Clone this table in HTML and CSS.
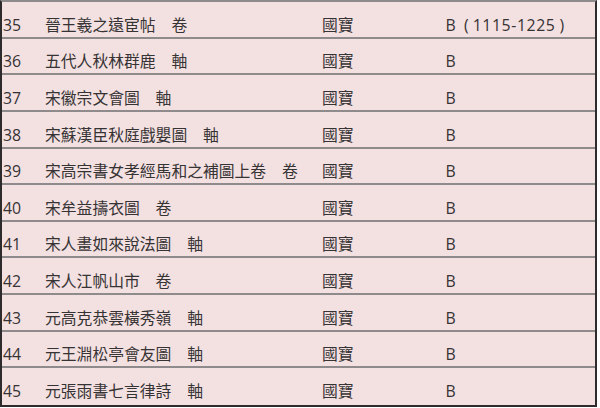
FILE: index.html
```html
<!DOCTYPE html>
<html lang="zh-Hant">
<head>
<meta charset="utf-8">
<link rel="stylesheet" href="styles.css">
</head>
<body>
<div class="table">
  <div class="row"><span class="num">35</span><span class="name">晉王羲之遠宦帖　卷</span><span class="grade">國寶</span><span class="cls">B&nbsp; (&nbsp;<span class="date">1115-1225</span>&nbsp;)</span></div>
  <div class="row"><span class="num">36</span><span class="name">五代人秋林群鹿　軸</span><span class="grade">國寶</span><span class="cls">B</span></div>
  <div class="row"><span class="num">37</span><span class="name">宋徽宗文會圖　軸</span><span class="grade">國寶</span><span class="cls">B</span></div>
  <div class="row"><span class="num">38</span><span class="name">宋蘇漢臣秋庭戲嬰圖　軸</span><span class="grade">國寶</span><span class="cls">B</span></div>
  <div class="row"><span class="num">39</span><span class="name">宋高宗書女孝經馬和之補圖上卷　卷</span><span class="grade">國寶</span><span class="cls">B</span></div>
  <div class="row"><span class="num">40</span><span class="name">宋牟益擣衣圖　卷</span><span class="grade">國寶</span><span class="cls">B</span></div>
  <div class="row"><span class="num">41</span><span class="name">宋人畫如來說法圖　軸</span><span class="grade">國寶</span><span class="cls">B</span></div>
  <div class="row"><span class="num">42</span><span class="name">宋人江帆山市　卷</span><span class="grade">國寶</span><span class="cls">B</span></div>
  <div class="row"><span class="num">43</span><span class="name">元高克恭雲橫秀嶺　軸</span><span class="grade">國寶</span><span class="cls">B</span></div>
  <div class="row"><span class="num">44</span><span class="name">元王淵松亭會友圖　軸</span><span class="grade">國寶</span><span class="cls">B</span></div>
  <div class="row"><span class="num">45</span><span class="name">元張雨書七言律詩　軸</span><span class="grade">國寶</span><span class="cls">B</span></div>
</div>
</body>
</html>
```
FILE: styles.css
```css
html, body {
  margin: 0;
  padding: 0;
  background: #ffffff;
}
.table {
  width: 593px;
  border-top: 2px solid #8f8a8b;
  border-left: 2px solid #2e2b2c;
  border-right: 2px solid #2e2b2c;
  border-bottom: 2px solid #2e2b2c;
  background: #f3e0e1;
  font-family: "Open Sans", "Noto Sans CJK TC", sans-serif;
  font-size: 15.8px;
  color: #363334;
}
.row {
  display: grid;
  grid-template-columns: 42px 277px 123.5px 1fr;
  padding-left: 1px;
  height: 34.64px;
  box-sizing: content-box;
  border-bottom: 2px solid #8f8a8b;
  line-height: 20px;
  align-items: end;
}
.row:last-child {
  border-bottom: none;
  height: 36.64px;
}
.row > span {
  padding-bottom: 2px;
  white-space: nowrap;
}
.row:last-child > span {
  padding-bottom: 4px;
}
.grade, .name {
  font-family: "Noto Sans CJK TC", sans-serif;
}
.date {
  letter-spacing: 0.6px;
}
```
